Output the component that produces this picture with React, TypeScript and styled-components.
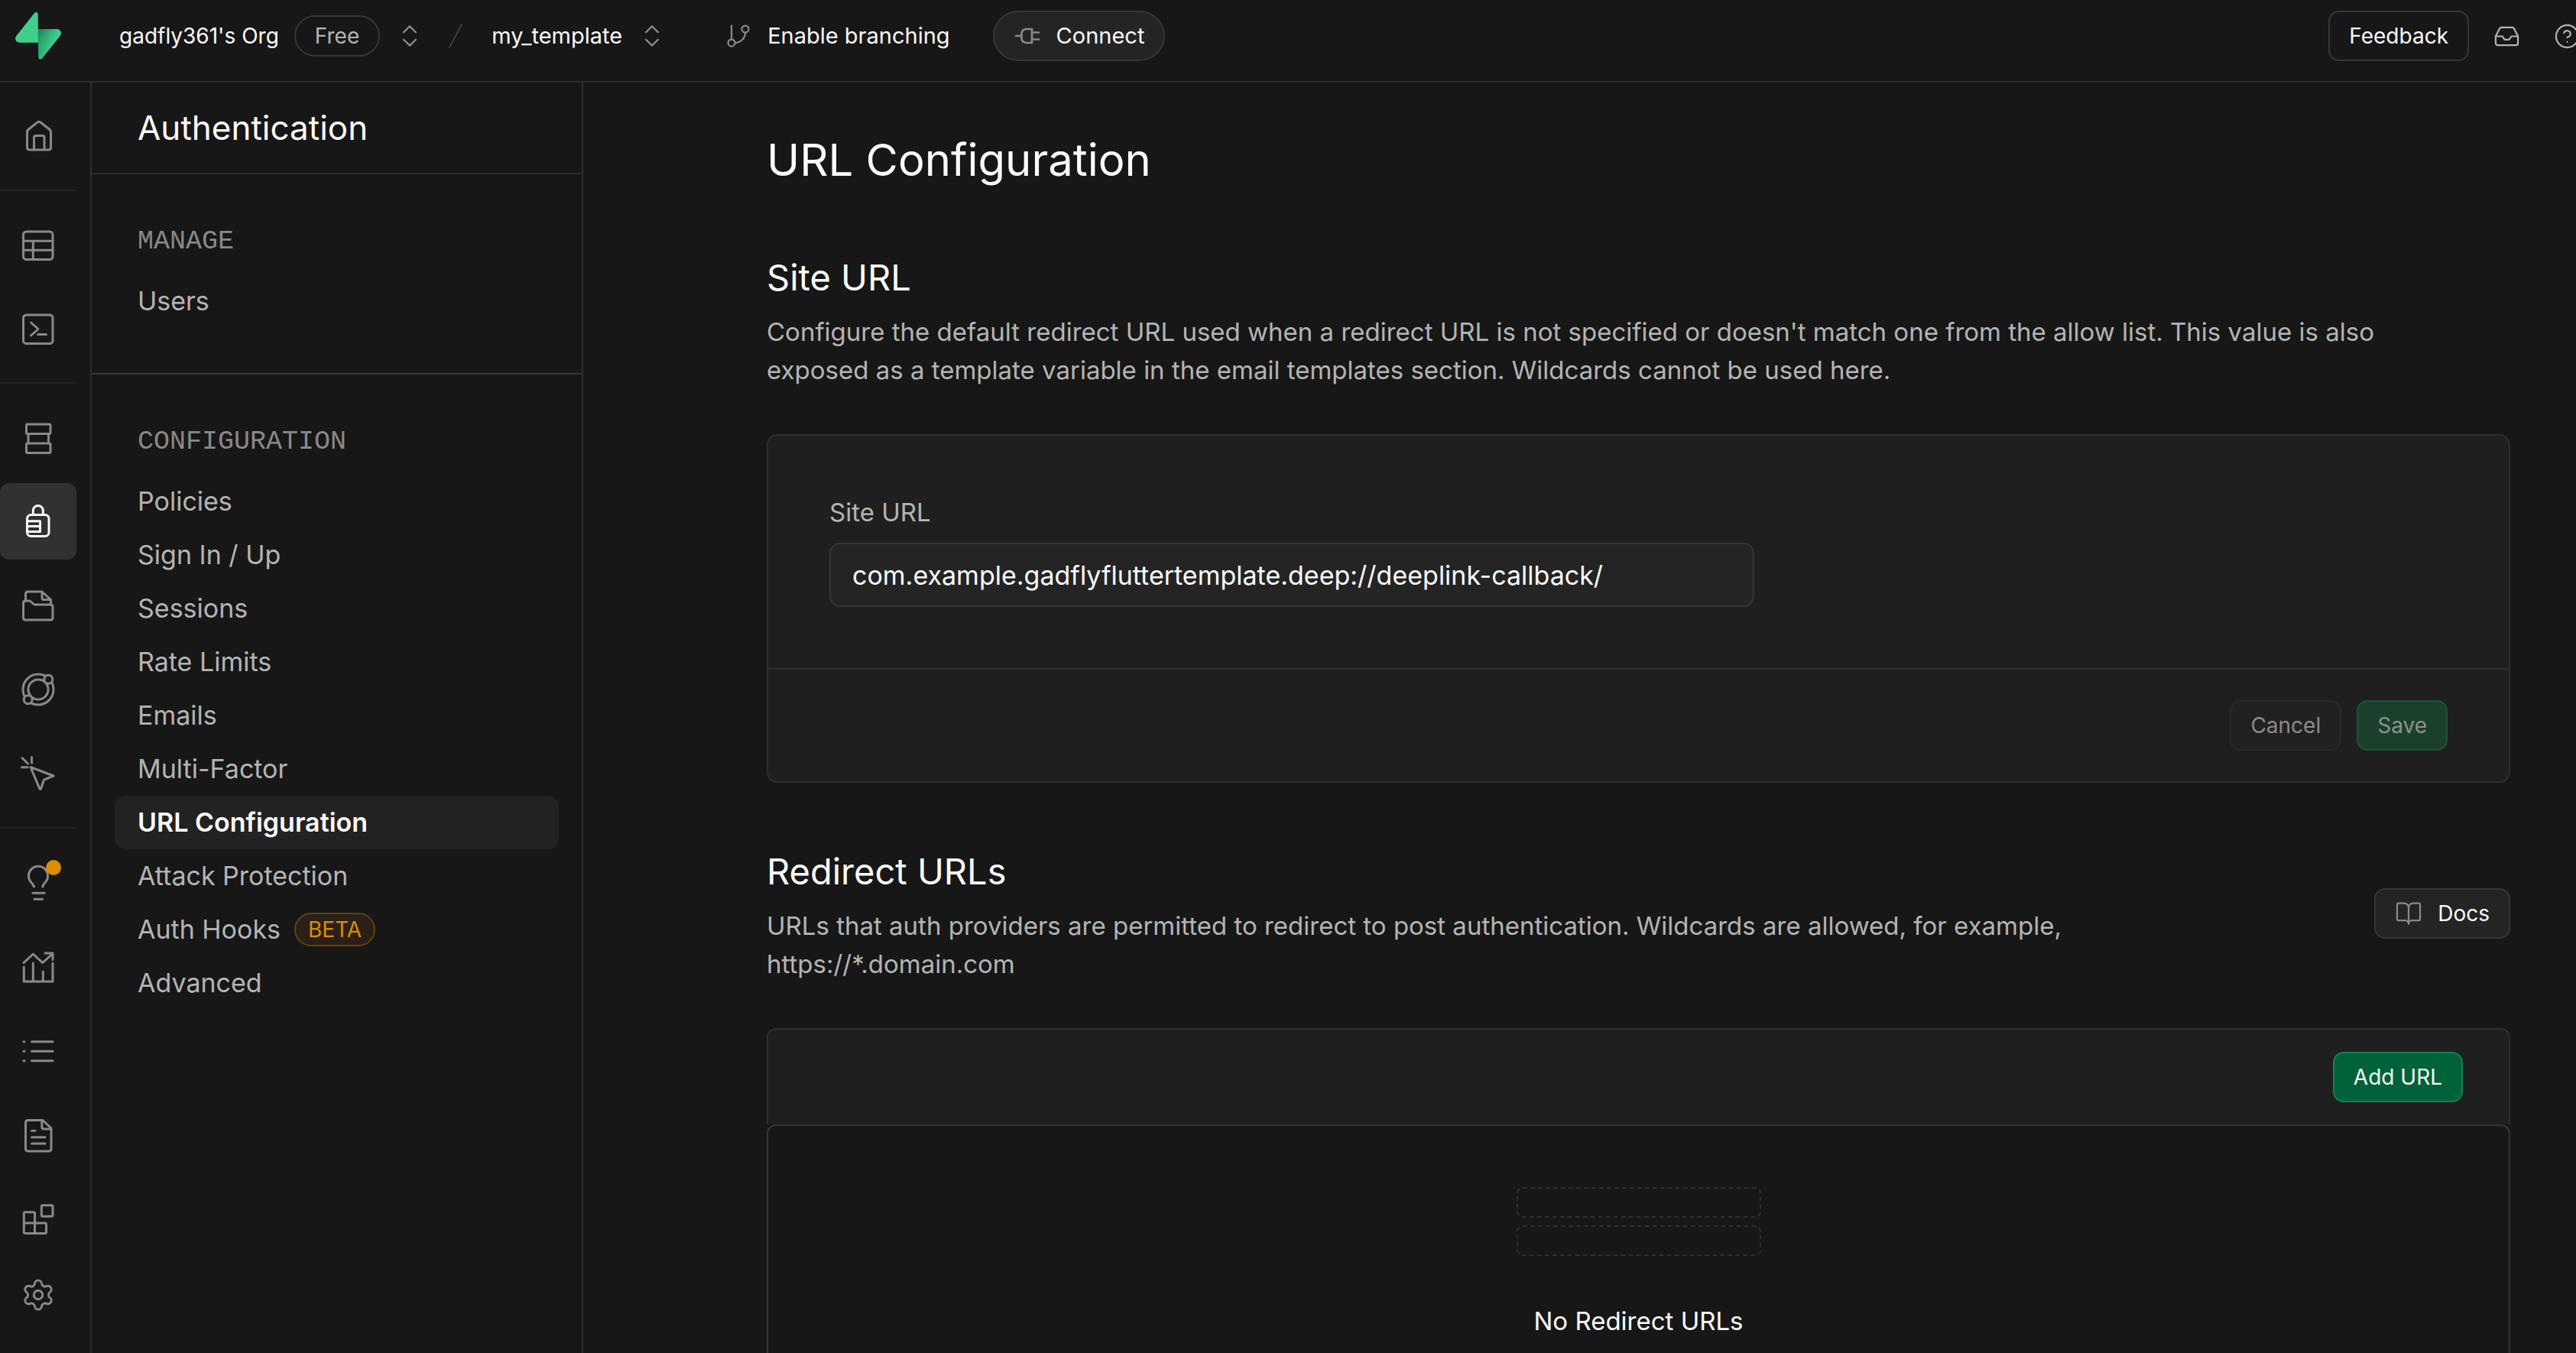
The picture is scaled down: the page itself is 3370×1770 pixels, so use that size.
import React from "react";
import styled, { createGlobalStyle, css } from "styled-components";
import { BookOpen, ChevronsUpDown, CircleHelp, GitBranch, Inbox, Settings } from "lucide-react";

const color = {
  bg: "#171717",
  surface: "#1f1f1f",
  control: "#242424",
  tile: "#313131",
  selected: "#222222",
  line: "#2e2e2e",
  lineSoft: "#242424",
  lineStrong: "#363636",
  text: "#fafafa",
  textLight: "#b4b4b4",
  textMuted: "#898989",
  amber: "#db8e00",
};

const GlobalStyle = createGlobalStyle`
  *, *::before, *::after { box-sizing: border-box; }
  body {
    margin: 0;
    background: ${color.bg};
    color: ${color.text};
    font-family: Inter, "Liberation Sans", sans-serif;
    font-size: 28px;
    line-height: 40px;
  }
  button, input { font: inherit; color: inherit; }
  a { color: inherit; text-decoration: none; }
  h1, h2, h3, p, ul { margin: 0; padding: 0; font-weight: 400; }
  ul { list-style: none; }
  svg { display: block; flex: none; }
`;

const Shell = styled.div`
  display: flex;
  flex-direction: column;
  height: 100vh;
  overflow: hidden;
`;

const TopBar = styled.header`
  display: flex;
  flex: none;
  justify-content: space-between;
  align-items: center;
  height: 108px;
  padding: 0 0 12px 20px;
  border-bottom: 2px solid ${color.line};
  overflow: hidden;
`;

const BarGroup = styled.div`
  display: flex;
  align-items: center;
  gap: 20px;
  white-space: nowrap;
`;

const BarStart = styled(BarGroup)`
  gap: 76px;
`;

const ProjectGroup = styled(BarGroup)`
  padding-left: 6px;
  font-size: 29px;
`;

const ActionGroup = styled(BarGroup)`
  gap: 56px;
  font-size: 29px;
`;

const BarEnd = styled(BarGroup)`
  gap: 0;
  margin-right: -28px;
`;

const PlanBadge = styled.span`
  padding: 5px 25px;
  border: 2px solid ${color.lineStrong};
  border-radius: 27px;
  color: ${color.textLight};
`;

const BareButton = styled.button`
  display: flex;
  align-items: center;
  gap: 20px;
  padding: 0;
  border: 0;
  background: none;
  cursor: pointer;
  svg { color: ${color.textMuted}; }
`;

const IconButton = styled(BareButton)`
  padding: 22px;
  svg { color: ${color.textLight}; }
`;

type Tone = "outline" | "default" | "primary";

const tones = {
  outline: css`
    background: transparent;
    border-color: ${color.lineStrong};
  `,
  default: css`
    background: ${color.control};
    border-color: ${color.lineStrong};
    &:disabled {
      background: #212121;
      border-color: #292929;
      color: #8b8b8b;
    }
  `,
  primary: css`
    background: #006239;
    border-color: #13814f;
    &:disabled {
      background: #1a402c;
      border-color: #1d5236;
      color: #8e908f;
    }
  `,
};

const Button = styled.button<{ $tone: Tone; $round?: boolean }>`
  display: flex;
  flex: none;
  align-items: center;
  gap: 20px;
  height: 66px;
  padding: 0 25px;
  border: 2px solid;
  border-radius: ${(p) => (p.$round ? 33 : 14)}px;
  white-space: nowrap;
  cursor: pointer;
  svg { color: ${color.textMuted}; }
  ${(p) => tones[p.$tone]}
`;

const FeedbackButton = styled(Button)`
  margin-right: 10px;
`;

const Columns = styled.div`
  display: flex;
  flex: 1;
  min-height: 0;
`;

const Rail = styled.nav`
  display: flex;
  flex: none;
  flex-direction: column;
  width: 120px;
  padding-top: 20px;
  border-right: 2px solid ${color.line};
`;

const RailGroup = styled.div`
  display: flex;
  flex-direction: column;
  gap: 10px;
  width: 98px;
  & + & {
    margin-top: 20px;
    padding-top: 20px;
    border-top: 2px solid ${color.lineSoft};
  }
`;

const RailLink = styled.a<{ $active?: boolean }>`
  position: relative;
  display: flex;
  flex: none;
  align-items: center;
  justify-content: center;
  width: 100px;
  height: 100px;
  border-radius: 12px;
  background: ${(p) => (p.$active ? color.tile : "transparent")};
  color: ${(p) => (p.$active ? color.text : color.textMuted)};
`;

const AlertDot = styled.span`
  position: absolute;
  top: 21px;
  right: 20px;
  width: 20px;
  height: 20px;
  border-radius: 50%;
  background: ${color.amber};
`;

const Sidebar = styled.aside`
  flex: none;
  width: 643px;
  border-right: 2px solid ${color.line};
`;

const SidebarTitle = styled.h2`
  padding: 30px 60px;
  border-bottom: 2px solid ${color.line};
  font-size: 44px;
  line-height: 58px;
`;

const MenuGroup = styled.section`
  padding: 63px 30px 59px;
  & + & { border-top: 2px solid ${color.lineStrong}; }
`;

const MenuHeading = styled.h3`
  margin-bottom: 18px;
  padding-left: 30px;
  color: ${color.textMuted};
  font-family: "Liberation Mono", monospace;
  font-size: 35px;
  line-height: 50px;
  text-transform: uppercase;
`;

const MenuLink = styled.a<{ $active?: boolean }>`
  display: flex;
  align-items: center;
  gap: 18px;
  height: 70px;
  padding: 0 30px;
  border-radius: 14px;
  background: ${(p) => (p.$active ? color.selected : "transparent")};
  color: ${(p) => (p.$active ? color.text : color.textLight)};
  font-size: 34px;
  font-weight: ${(p) => (p.$active ? 600 : 400)};
`;

const BetaBadge = styled.span`
  padding: 0 16px;
  border: 2px solid #693f05;
  border-radius: 22px;
  background: #2a2018;
  color: ${color.amber};
  font-size: 28px;
  line-height: 40px;
`;

const Content = styled.main`
  flex: 1;
  min-width: 0;
  padding: 65px 86px 0 240px;
  overflow: hidden;
`;

const PageTitle = styled.h1`
  margin-bottom: 82px;
  font-size: 58px;
  line-height: 72px;
`;

const Section = styled.section`
  margin-bottom: 80px;
`;

const SectionHead = styled.div`
  display: flex;
  align-items: center;
  justify-content: space-between;
  gap: 40px;
  margin-bottom: 59px;
`;

const SectionTitle = styled.h2`
  margin-bottom: 10px;
  font-size: 47px;
  line-height: 72px;
`;

const SectionText = styled.p`
  max-width: 96%;
  color: ${color.textLight};
  font-size: 33px;
  line-height: 50px;
`;

const FormCard = styled.form`
  border: 2px solid ${color.line};
  border-radius: 14px;
  background: ${color.surface};
`;

const FormBody = styled.div`
  display: grid;
  grid-template-columns: 4fr 3fr;
  padding: 80px;
`;

const Field = styled.div`
  display: flex;
  flex-direction: column;
  gap: 20px;
`;

const FieldLabel = styled.label`
  color: ${color.textLight};
  font-size: 33px;
  line-height: 40px;
`;

const TextInput = styled.input`
  width: 100%;
  height: 84px;
  padding: 0 28px;
  border: 2px solid ${color.lineStrong};
  border-radius: 14px;
  outline: 0;
  background: ${color.control};
  font-size: 34px;
`;

const FormFoot = styled.div`
  display: flex;
  justify-content: flex-end;
  gap: 20px;
  padding: 40px 80px;
  border-top: 2px solid ${color.line};
`;

const ListHead = styled.div`
  display: flex;
  justify-content: flex-end;
  padding: 29px 60px;
  border: 2px solid ${color.line};
  border-bottom: 0;
  border-radius: 12px 12px 0 0;
  background: ${color.surface};
`;

const EmptyPanel = styled.div`
  display: flex;
  flex-direction: column;
  align-items: center;
  gap: 10px;
  padding: 80px;
  border: 2px solid ${color.lineStrong};
  border-radius: 12px;
`;

const Placeholder = styled.div`
  width: 320px;
  height: 40px;
  border: 2px dashed ${color.line};
  border-radius: 8px;
`;

const EmptyText = styled.p`
  margin-top: 50px;
  font-size: 33px;
  line-height: 50px;
`;

const Logo = () => (
  <svg width="60" height="62" viewBox="0 0 109 113" fill="none" aria-hidden="true">
    <defs>
      <linearGradient id="boltBase" x1="53.97" y1="54.97" x2="94.16" y2="71.83" gradientUnits="userSpaceOnUse">
        <stop stopColor="#249361" />
        <stop offset="1" stopColor="#3ECF8E" />
      </linearGradient>
      <linearGradient id="boltShade" x1="36.16" y1="30.58" x2="54.48" y2="65.08" gradientUnits="userSpaceOnUse">
        <stop />
        <stop offset="1" stopOpacity="0" />
      </linearGradient>
    </defs>
    <path fill="url(#boltBase)" d="M63.71 110.28C60.85 113.89 55.05 111.91 54.98 107.31L53.97 40.06H99.19C107.38 40.06 111.95 49.52 106.86 55.94L63.71 110.28Z" />
    <path fill="url(#boltShade)" fillOpacity="0.2" d="M63.71 110.28C60.85 113.89 55.05 111.91 54.98 107.31L53.97 40.06H99.19C107.38 40.06 111.95 49.52 106.86 55.94L63.71 110.28Z" />
    <path fill="#3ECF8E" d="M45.32 2.07C48.18 -1.53 53.97 0.44 54.04 5.04L54.48 72.29H9.83C1.64 72.29 -2.93 62.83 2.17 56.42L45.32 2.07Z" />
  </svg>
);

const Slash = () => (
  <svg width="42" height="42" viewBox="0 0 24 24" fill="none" stroke="#444444" strokeWidth="1" strokeLinecap="round" aria-hidden="true">
    <path d="M16.5 3.5L7.5 20.5" />
  </svg>
);

const Plug = () => (
  <svg width="36" height="36" viewBox="0 0 24 24" fill="none" stroke="currentColor" strokeWidth="1.8" strokeLinecap="round" strokeLinejoin="round" aria-hidden="true">
    <path d="M2 12h5M16 9h6M16 15h6M16 18h-5a4 4 0 0 1-4-4v-4a4 4 0 0 1 4-4h5Z" />
  </svg>
);

const RailIcon = styled.svg.attrs({ viewBox: "0 0 44 44", fill: "none", "aria-hidden": true })`
  width: 44px;
  height: 44px;
  overflow: visible;
  stroke: currentColor;
  stroke-width: 3;
  stroke-linecap: round;
  stroke-linejoin: round;
`;

const icons = {
  home: (
    <path d="M7.5 16.5Q7.5 14.8 9 13.5L21.3 3.8Q23 2.6 24.7 3.8L37 13.5Q38.5 14.8 38.5 16.5V37Q38.5 40 35.5 40H10.5Q7.5 40 7.5 37ZM16.5 40V24Q16.5 21.5 19 21.5H27.5Q30 21.5 30 24V40" />
  ),
  table: (
    <>
      <rect x="2.5" y="5" width="38.5" height="36.5" rx="4" />
      <path d="M2.5 17.3H41M2.5 29.3H41M15.3 17.3V41.5" />
    </>
  ),
  sql: (
    <>
      <rect x="2.5" y="4" width="38.5" height="37.5" rx="4" />
      <path d="M12.5 14L22 22.5L12.5 31M21.5 29.5H32.5" />
    </>
  ),
  database: (
    <>
      <rect x="6.5" y="5" width="31.5" height="12.5" rx="1.5" />
      <rect x="6.5" y="30" width="31.5" height="12.5" rx="1.5" />
      <path d="M9 17.5V30M35.5 17.5V30" />
    </>
  ),
  auth: (
    <>
      <rect x="7.5" y="13.5" width="28.5" height="28" rx="5" />
      <path d="M15.3 13.5V8A6.5 6.5 0 0 1 28.3 8V13.5M9.5 21.7H24.5V35.5H9.5M9.5 28.6H24.5" />
    </>
  ),
  storage: (
    <>
      <path d="M5.5 16V7Q5.5 4 8.5 4H27L38.5 14.5V21M27 4V12Q27 14.5 29.5 14.5H38" />
      <path d="M2.5 19Q2.5 16 5.5 16H9.5Q11.5 16 13 17.5L15 19.5Q16.5 21 18.5 21H38Q41 21 41 24V38Q41 41 38 41H5.5Q2.5 41 2.5 38Z" />
    </>
  ),
  functions: (
    <>
      <circle cx="22" cy="22" r="20" />
      <circle cx="22" cy="22" r="13" />
      <circle cx="35.3" cy="8.7" r="5.5" fill={color.bg} />
      <circle cx="8.7" cy="35.3" r="5.5" fill={color.bg} />
    </>
  ),
  realtime: (
    <path d="M12 13.5L42 25L31 29.5Q29.5 30 29 31.5L25.5 42Q24.5 43 23.7 41.5ZM13.5 0.5V8M0.5 13.8H8M1 1.5L8.5 9" />
  ),
  advisors: (
    <path d="M16.5 28Q15.8 25.5 13 22.5A12.5 12.5 0 1 1 31 22.5Q28.2 25.5 27.8 28M15 36.3H30M17 44.3H27.5" />
  ),
  reports: (
    <path d="M3.3 23V42H41V18M15.3 18V42M28.3 29V42M3 17.5L15.3 6L27.7 17.5L41 5.5M31 5H41V13.5" />
  ),
  logs: (
    <path d="M13.5 10.8H41M13.5 23.3H41M13.5 35.8H41M3 10.8H4M3 23.3H4M3 35.8H4" />
  ),
  docs: (
    <path d="M9 3.5H28L39 14V40.5Q39 44 35.5 44H9Q5.5 44 5.5 40.5V7Q5.5 3.5 9 3.5ZM26.8 4V12Q26.8 15 30 15H39M13.5 17.3H18M13.5 25.7H31M13.5 34H31" />
  ),
  integrations: (
    <>
      <rect x="26.3" y="4.7" width="14.7" height="14.5" rx="1.5" />
      <path d="M17.5 28H31Q32.5 28 32.5 29.5V40Q32.5 41.5 31 41.5H5Q3.3 41.5 3.3 40V15.2Q3.3 13.7 5 13.7H16Q17.5 13.7 17.5 15.2V41.5M3.3 28H17.5" />
    </>
  ),
};

type IconName = keyof typeof icons;

const railGroups: { name: IconName; label: string; alert?: boolean }[][] = [
  [{ name: "home", label: "Home" }],
  [
    { name: "table", label: "Table Editor" },
    { name: "sql", label: "SQL Editor" },
  ],
  [
    { name: "database", label: "Database" },
    { name: "auth", label: "Authentication" },
    { name: "storage", label: "Storage" },
    { name: "functions", label: "Edge Functions" },
    { name: "realtime", label: "Realtime" },
  ],
  [
    { name: "advisors", label: "Advisors", alert: true },
    { name: "reports", label: "Reports" },
    { name: "logs", label: "Logs" },
    { name: "docs", label: "API Docs" },
    { name: "integrations", label: "Integrations" },
  ],
];

const menu: { heading: string; items: { label: string; beta?: boolean }[] }[] = [
  { heading: "Manage", items: [{ label: "Users" }] },
  {
    heading: "Configuration",
    items: [
      { label: "Policies" },
      { label: "Sign In / Up" },
      { label: "Sessions" },
      { label: "Rate Limits" },
      { label: "Emails" },
      { label: "Multi-Factor" },
      { label: "URL Configuration" },
      { label: "Attack Protection" },
      { label: "Auth Hooks", beta: true },
      { label: "Advanced" },
    ],
  },
];

export default function App() {
  const [siteUrl, setSiteUrl] = React.useState("com.example.gadflyfluttertemplate.deep://deeplink-callback/");

  return (
    <>
      <GlobalStyle />
      <Shell>
        <TopBar>
          <BarStart>
            <a href="#projects" aria-label="Projects">
              <Logo />
            </a>
            <BarGroup>
              <a href="#org">gadfly361's Org</a>
              <PlanBadge>Free</PlanBadge>
              <BareButton aria-label="Switch organization">
                <ChevronsUpDown size={38} strokeWidth={1.5} />
              </BareButton>
              <Slash />
              <ProjectGroup>
                <a href="#project">my_template</a>
                <BareButton aria-label="Switch project">
                  <ChevronsUpDown size={38} strokeWidth={1.5} />
                </BareButton>
              </ProjectGroup>
            </BarGroup>
            <ActionGroup>
              <BareButton>
                <GitBranch size={36} strokeWidth={1.5} />
                Enable branching
              </BareButton>
              <Button $tone="default" $round>
                <Plug />
                Connect
              </Button>
            </ActionGroup>
          </BarStart>
          <BarEnd>
            <FeedbackButton $tone="outline">Feedback</FeedbackButton>
            <IconButton aria-label="Notifications">
              <Inbox size={35} strokeWidth={1.5} />
            </IconButton>
            <IconButton aria-label="Help">
              <CircleHelp size={35} strokeWidth={1.5} />
            </IconButton>
          </BarEnd>
        </TopBar>

        <Columns>
          <Rail aria-label="Project">
            {railGroups.map((group) => (
              <RailGroup key={group[0].name}>
                {group.map((item) => (
                  <RailLink key={item.name} href={`#${item.name}`} aria-label={item.label} $active={item.name === "auth"}>
                    <RailIcon>{icons[item.name]}</RailIcon>
                    {item.alert && <AlertDot />}
                  </RailLink>
                ))}
              </RailGroup>
            ))}
            <RailLink href="#settings" aria-label="Project Settings">
              <Settings size={46} strokeWidth={1.5} />
            </RailLink>
          </Rail>

          <Sidebar>
            <SidebarTitle>Authentication</SidebarTitle>
            {menu.map((group) => (
              <MenuGroup key={group.heading}>
                <MenuHeading>{group.heading}</MenuHeading>
                <ul>
                  {group.items.map((item) => (
                    <li key={item.label}>
                      <MenuLink href="#menu" $active={item.label === "URL Configuration"}>
                        {item.label}
                        {item.beta && <BetaBadge>BETA</BetaBadge>}
                      </MenuLink>
                    </li>
                  ))}
                </ul>
              </MenuGroup>
            ))}
          </Sidebar>

          <Content>
            <PageTitle>URL Configuration</PageTitle>

            <Section>
              <SectionHead>
                <div>
                  <SectionTitle>Site URL</SectionTitle>
                  <SectionText>
                    Configure the default redirect URL used when a redirect URL is not specified or doesn't match one from
                    the allow list. This value is also exposed as a template variable in the email templates section.
                    Wildcards cannot be used here.
                  </SectionText>
                </div>
              </SectionHead>
              <FormCard onSubmit={(e) => e.preventDefault()}>
                <FormBody>
                  <Field>
                    <FieldLabel htmlFor="site-url">Site URL</FieldLabel>
                    <TextInput id="site-url" type="text" value={siteUrl} onChange={(e) => setSiteUrl(e.target.value)} />
                  </Field>
                </FormBody>
                <FormFoot>
                  <Button type="reset" $tone="default" disabled>
                    Cancel
                  </Button>
                  <Button type="submit" $tone="primary" disabled>
                    Save
                  </Button>
                </FormFoot>
              </FormCard>
            </Section>

            <Section>
              <SectionHead>
                <div>
                  <SectionTitle>Redirect URLs</SectionTitle>
                  <SectionText>
                    URLs that auth providers are permitted to redirect to post authentication. Wildcards are allowed, for
                    example, https://*.domain.com
                  </SectionText>
                </div>
                <Button as="a" href="#docs" $tone="default">
                  <BookOpen size={36} strokeWidth={1.5} />
                  Docs
                </Button>
              </SectionHead>
              <ListHead>
                <Button $tone="primary">Add URL</Button>
              </ListHead>
              <EmptyPanel>
                <Placeholder />
                <Placeholder />
                <EmptyText>No Redirect URLs</EmptyText>
              </EmptyPanel>
            </Section>
          </Content>
        </Columns>
      </Shell>
    </>
  );
}
